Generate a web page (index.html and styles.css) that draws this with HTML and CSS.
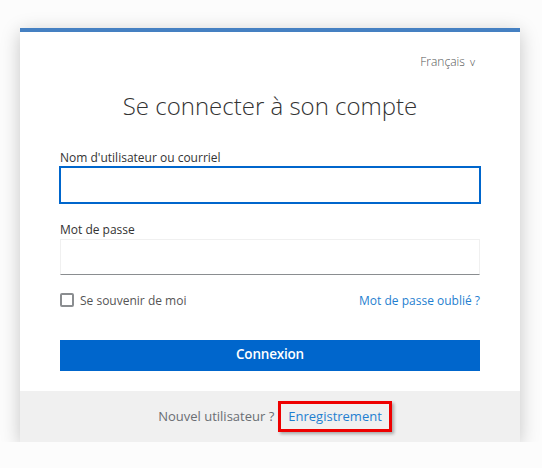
FILE: index.html
```html
<!DOCTYPE html>
<html lang="fr">
<head>
  <meta charset="UTF-8" />
  <meta name="viewport" content="width=device-width, initial-scale=1.0"/>
  <title>Se connecter</title>
  <link rel="stylesheet" href="styles.css">
</head>
<body>
  <div class="login-card">
    <div class="card-header">
      <div class="lang">Français <span class="caret">v</span></div>
      <h1>Se connecter à son compte</h1>
    </div>

    <form class="card-body" onsubmit="return false">
      <div class="field">
        <label for="username">Nom d'utilisateur ou courriel</label>
        <input type="text" id="username" class="is-focused">
      </div>

      <div class="field">
        <label for="password">Mot de passe</label>
        <input type="password" id="password">
      </div>

      <div class="options">
        <label class="remember"><input type="checkbox"> Se souvenir de moi</label>
        <a href="#" class="link">Mot de passe oublié ?</a>
      </div>

      <button type="submit">Connexion</button>
    </form>

    <div class="card-footer">
      Nouvel utilisateur ? <span class="highlight"><a href="#" class="link">Enregistrement</a></span>
    </div>
  </div>
</body>
</html>
```

FILE: styles.css
```css
body {
  font-family: "Open Sans", "Liberation Sans", sans-serif;
  background: #fcfcfc;
  margin: 0;
  padding: 28px 0 0 20px;
  color: #151515;
}

.login-card {
  width: 500px;
  background: #fff;
  border-top: 4px solid #4580c2;
  box-shadow: 0 4px 18px rgba(0, 0, 0, 0.22);
}

.card-header {
  padding: 21px 40px 0;
}

.lang {
  text-align: right;
  font-size: 12px;
  font-weight: 300;
  color: #555;
  padding-right: 5px;
}

.caret {
  font-size: 11px;
  margin-left: 2px;
}

h1 {
  margin: 20px 0 0;
  font-size: 24px;
  font-weight: 300;
  color: #333;
  text-align: center;
  line-height: 32px;
}

.card-body {
  padding: 27px 40px 20px;
}

.field {
  margin-bottom: 18px;
}

.field label {
  display: block;
  font-size: 12px;
  color: #333;
  line-height: 18px;
}

.field input {
  display: block;
  box-sizing: border-box;
  width: 100%;
  height: 36px;
  margin: 0;
  padding: 0 8px;
  border: 1px solid #f0f0f0;
  border-bottom-color: #8a8d90;
  font-size: 14px;
  background: #fff;
}

.field input.is-focused {
  border: 1px solid #06c;
  outline: 1px solid #06c;
}

.options {
  display: flex;
  justify-content: space-between;
  align-items: center;
  height: 14px;
  font-size: 12px;
}

.remember {
  display: flex;
  align-items: center;
  gap: 6px;
  color: #555;
}

.remember input {
  appearance: none;
  width: 14px;
  height: 14px;
  margin: 0;
  border: 2px solid #8a8d90;
  border-radius: 2px;
}

.link {
  color: #1f7fd0;
  text-decoration: none;
}

button {
  display: block;
  width: 100%;
  height: 31px;
  margin-top: 33px;
  padding: 0 0 3px;
  border: none;
  background: #06c;
  color: #fff;
  font-family: "Open Sans", sans-serif;
  font-size: 13.5px;
  font-weight: 600;
  letter-spacing: -0.2px;
}

.card-footer {
  background: #f0f0f0;
  height: 51px;
  box-sizing: border-box;
  display: flex;
  align-items: center;
  justify-content: center;
  gap: 4px;
  font-size: 13px;
  color: #6a6e73;
  padding: 0 0 1px 10px;
}

.highlight {
  border: 3px solid #e00;
  padding: 3px 7px 4px;
  box-shadow: 2px 2px 3px rgba(0, 0, 0, 0.3);
}
```
